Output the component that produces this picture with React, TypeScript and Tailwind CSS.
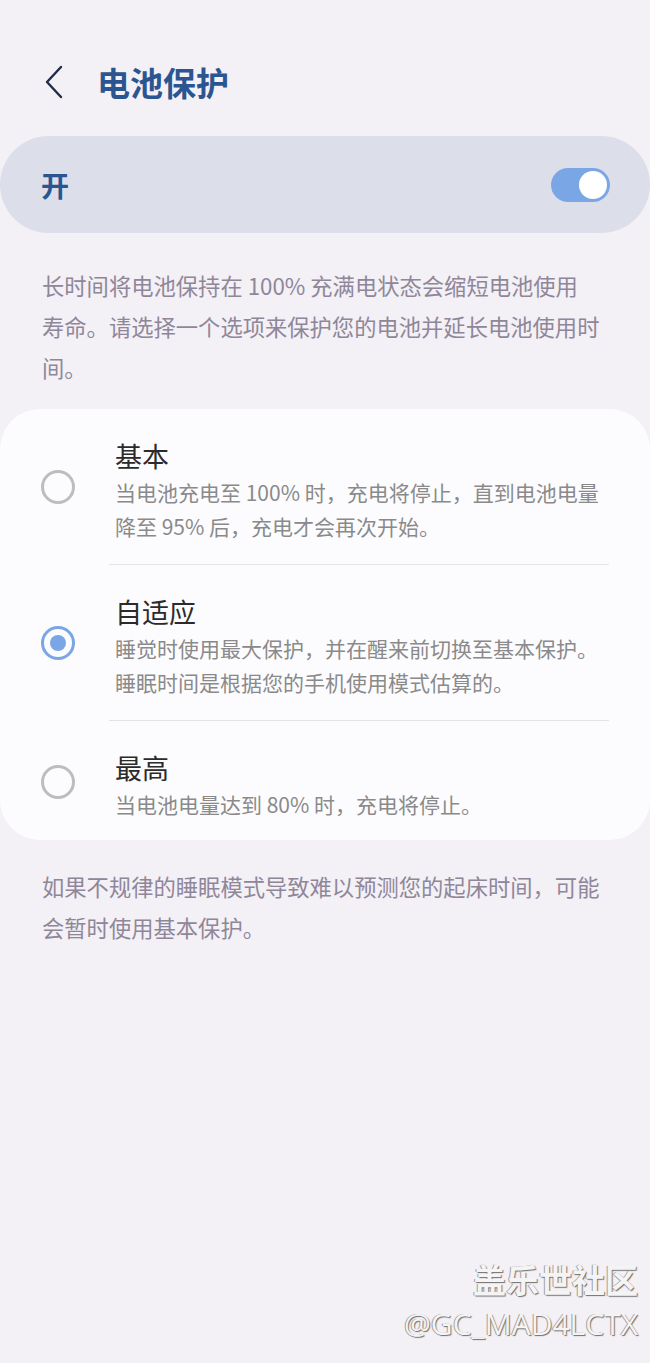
import React from "react";

const font = { fontFamily: '"Noto Sans CJK SC", "Noto Sans", sans-serif' };

type Option = {
  title: string;
  lines: string[];
  checked?: boolean;
};

const options: Option[] = [
  {
    title: "基本",
    lines: ["当电池充电至 100% 时，充电将停止，直到电池电量", "降至 95% 后，充电才会再次开始。"],
  },
  {
    title: "自适应",
    lines: ["睡觉时使用最大保护，并在醒来前切换至基本保护。", "睡眠时间是根据您的手机使用模式估算的。"],
    checked: true,
  },
  {
    title: "最高",
    lines: ["当电池电量达到 80% 时，充电将停止。"],
  },
];

const Radio = ({ checked }: { checked?: boolean }) =>
  checked ? (
    <div className="flex h-[34px] w-[34px] shrink-0 items-center justify-center rounded-full border-[3px] border-[#7ba6e6] mb-[7px]">
      <div className="h-[16px] w-[16px] rounded-full bg-[#7ba6e6]" />
    </div>
  ) : (
    <div className="h-[34px] w-[34px] shrink-0 rounded-full border-[3px] border-[#bdbdbd] mb-[7px]" />
  );

export default function App() {
  return (
    <div style={font} className="relative min-h-[1363px] w-[650px] bg-[#f3f0f6] overflow-hidden">
      {/* header */}
      <div className="mt-[56px] flex h-[52px] items-center pl-[44px]">
        <svg width="20" height="34" viewBox="0 0 20 34" fill="none">
          <path d="M17 2 L3 17 L17 32" stroke="#1e2c47" strokeWidth="2.4" strokeLinecap="round" strokeLinejoin="round" />
        </svg>
        <h1 className="ml-[33px] text-[33px] font-bold leading-none text-[#2b5590]">电池保护</h1>
      </div>

      {/* master switch */}
      <div className="mt-[28px] flex h-[97px] items-center justify-between rounded-full bg-[#dcdfe9] pl-[41px] pr-[40px]">
        <span className="text-[28px] font-bold text-[#2b5590]">开</span>
        <div className="flex h-[34px] w-[59px] items-center justify-end rounded-full bg-[#7ba6e6] pr-[3px]">
          <div className="h-[28px] w-[28px] rounded-full bg-white" />
        </div>
      </div>

      <p className="mt-[32px] px-[42px] text-[22.3px] leading-[41px] text-[#8f8799]">
        长时间将电池保持在 100% 充满电状态会缩短电池使用
        <br />
        寿命。请选择一个选项来保护您的电池并延长电池使用时
        <br />
        间。
      </p>

      {/* options card */}
      <div className="mt-[21px] rounded-[40px] bg-[#fcfcfe]">
        {options.map((o, i) => (
          <div key={o.title}>
            {i > 0 && <div className="ml-[109px] mr-[41px] h-px bg-[#e4e3e8]" />}
            <div className={`flex items-center pl-[41px] pt-[29px] ${i === options.length - 1 ? "pb-[19px]" : "pb-[21px]"}`}>
              <Radio checked={o.checked} />
              <div className="ml-[40px]">
                <div className="text-[27px] leading-[36px] text-[#2b2b2b]">{o.title}</div>
                <div className="mt-px text-[21px] leading-[34px] text-[#8a8a8a]">
                  {o.lines.map((l) => (
                    <div key={l}>{l}</div>
                  ))}
                </div>
              </div>
            </div>
          </div>
        ))}
      </div>

      <p className="mt-[26px] px-[42px] text-[22.3px] leading-[41px] text-[#8f8799]">
        如果不规律的睡眠模式导致难以预测您的起床时间，可能
        <br />
        会暂时使用基本保护。
      </p>

      {/* watermark */}
      <div className="absolute right-[12px] top-[1258px] flex flex-col items-end text-[#f4f4f4] [text-shadow:1px_1px_1px_#6f6f6f,-1px_0_0_#a0a0a0]">
        <span className="text-[33px] font-bold leading-[42px]">盖乐世社区</span>
        <span style={{ fontFamily: '"Open Sans", "Noto Sans", sans-serif' }} className="mt-[3px] text-[30px] leading-[42px]">
          @GC_MAD4LCTX
        </span>
      </div>
    </div>
  );
}
